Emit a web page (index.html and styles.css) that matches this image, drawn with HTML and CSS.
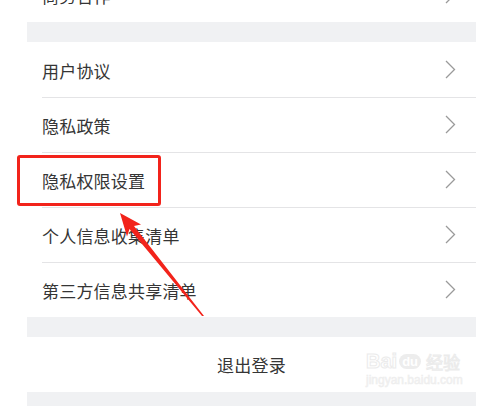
FILE: index.html
```html
<!DOCTYPE html>
<html lang="zh">
<head>
<meta charset="utf-8">
<link rel="stylesheet" href="styles.css">
</head>
<body>
<div class="page">
  <div class="panel">
    <div class="row cut"><span class="label">商务合作</span><span class="chev"><svg width="11" height="19" viewBox="0 0 11 19"><path d="M1 1 L9.5 9.5 L1 18" fill="none" stroke="#9a9a9a" stroke-width="1.3"/></svg></span></div>
    <div class="band"></div>
    <div class="group">
      <div class="row"><span class="label">用户协议</span><span class="chev"><svg width="11" height="19" viewBox="0 0 11 19"><path d="M1 1 L9.5 9.5 L1 18" fill="none" stroke="#9a9a9a" stroke-width="1.3"/></svg></span></div>
      <div class="row"><span class="label">隐私政策</span><span class="chev"><svg width="11" height="19" viewBox="0 0 11 19"><path d="M1 1 L9.5 9.5 L1 18" fill="none" stroke="#9a9a9a" stroke-width="1.3"/></svg></span></div>
      <div class="row"><span class="label">隐私权限设置</span><span class="chev"><svg width="11" height="19" viewBox="0 0 11 19"><path d="M1 1 L9.5 9.5 L1 18" fill="none" stroke="#9a9a9a" stroke-width="1.3"/></svg></span></div>
      <div class="row"><span class="label">个人信息收集清单</span><span class="chev"><svg width="11" height="19" viewBox="0 0 11 19"><path d="M1 1 L9.5 9.5 L1 18" fill="none" stroke="#9a9a9a" stroke-width="1.3"/></svg></span></div>
      <div class="row"><span class="label">第三方信息共享清单</span><span class="chev"><svg width="11" height="19" viewBox="0 0 11 19"><path d="M1 1 L9.5 9.5 L1 18" fill="none" stroke="#9a9a9a" stroke-width="1.3"/></svg></span></div>
    </div>
    <div class="band"></div>
    <div class="logout">退出登录</div>
    <div class="band"></div>
  </div>
  <div class="highlight"></div>
  <svg class="arrow" width="484" height="406" viewBox="0 0 484 406">
    <polygon points="120,213 141,224.5 134,226 204,316 202,316 129.5,229 127,236.5" fill="#f2231b"/>
  </svg>
  <div class="watermark">
    <div class="wm-top"><span class="wm-bai">Bai</span><span class="wm-du">du</span><span class="wm-jy">经验</span></div>
    <div class="wm-url">jingyan.baidu.com</div>
  </div>
</div>
</body>
</html>
```
FILE: styles.css
```css
html, body {
  margin: 0;
  padding: 0;
  background: #ffffff;
}
.page {
  position: relative;
  width: 484px;
  height: 406px;
  overflow: hidden;
  font-family: "Noto Sans CJK SC", "Noto Sans", sans-serif;
}
.panel {
  margin-left: 27px;
  width: 449px;
  margin-top: -33px;
}
.row {
  height: 55px;
  display: flex;
  align-items: center;
  justify-content: space-between;
  padding: 0 20px 0 15px;
  position: relative;
}
.group .row + .row::before {
  content: "";
  position: absolute;
  left: 15px;
  right: 0;
  top: 0;
  height: 1px;
  background: #e4e4e6;
}
.label {
  font-size: 17px;
  color: #353535;
  line-height: 1;
  letter-spacing: 0.2px;
  padding-top: 2px;
}
.chev {
  display: flex;
  align-items: center;
}
.chev svg {
  display: block;
}
.band {
  height: 20px;
  background: #f0f1f3;
}
.logout {
  height: 55px;
  display: flex;
  align-items: center;
  justify-content: center;
  font-size: 17px;
  color: #353535;
  letter-spacing: 0.2px;
}
.highlight {
  position: absolute;
  left: 17px;
  top: 155px;
  width: 138px;
  height: 45px;
  border: 3px solid #f2231b;
  border-radius: 3px;
}
.arrow {
  position: absolute;
  left: 0;
  top: 0;
}
.watermark {
  position: absolute;
  left: 366px;
  top: 350px;
  color: #f0f0f0;
  font-family: "Liberation Sans", sans-serif;
}
.wm-top {
  display: flex;
  align-items: center;
  gap: 2px;
  height: 22px;
}
.wm-bai {
  font-size: 20px;
  font-weight: bold;
  color: #fff;
  -webkit-text-stroke: 1px #ebebeb;
}
.wm-du {
  font-size: 13px;
  font-weight: bold;
  color: #fff;
  background: #ededed;
  border-radius: 8px;
  padding: 0 3px;
}
.wm-jy {
  font-size: 17px;
  font-family: "Noto Sans CJK SC", sans-serif;
  color: #fff;
  -webkit-text-stroke: 1px #ebebeb;
  margin-left: 3px;
}
.wm-url {
  font-size: 12px;
  color: #f3f3f3;
  -webkit-text-stroke: 0.5px #ededed;
  margin-top: 1px;
}
```
